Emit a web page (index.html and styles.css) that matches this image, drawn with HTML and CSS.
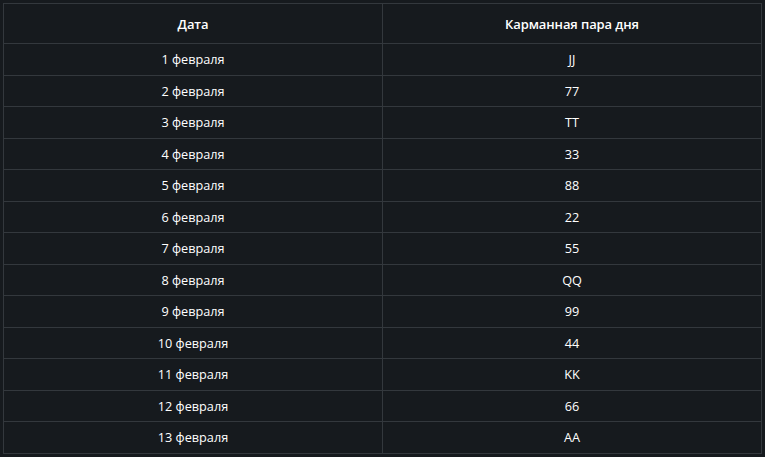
FILE: index.html
```html
<!DOCTYPE html>
<html lang="ru">
<head>
<meta charset="utf-8">
<link rel="stylesheet" href="styles.css">
</head>
<body>
<table class="pairs">
  <thead>
    <tr><th>Дата</th><th>Карманная пара дня</th></tr>
  </thead>
  <tbody>
    <tr><td>1 февраля</td><td>JJ</td></tr>
    <tr><td>2 февраля</td><td>77</td></tr>
    <tr><td>3 февраля</td><td>TT</td></tr>
    <tr><td>4 февраля</td><td>33</td></tr>
    <tr><td>5 февраля</td><td>88</td></tr>
    <tr><td>6 февраля</td><td>22</td></tr>
    <tr><td>7 февраля</td><td>55</td></tr>
    <tr><td>8 февраля</td><td>QQ</td></tr>
    <tr><td>9 февраля</td><td>99</td></tr>
    <tr><td>10 февраля</td><td>44</td></tr>
    <tr><td>11 февраля</td><td>KK</td></tr>
    <tr><td>12 февраля</td><td>66</td></tr>
    <tr><td>13 февраля</td><td>AA</td></tr>
  </tbody>
</table>
</body>
</html>
```
FILE: styles.css
```css
html, body {
  margin: 0;
  padding: 0;
  background: #161a1e;
}
body {
  padding: 3px 4px 0 3px;
  font-family: "Open Sans", "Noto Sans", sans-serif;
  font-size: 13px;
  color: #ffffff;
}
.pairs {
  width: 759px;
  border-collapse: collapse;
  table-layout: fixed;
}
.pairs th,
.pairs td {
  border: 1px solid #33383d;
  text-align: center;
  vertical-align: middle;
  padding: 0;
}
.pairs th {
  height: 39px;
  font-weight: 600;
  letter-spacing: -0.1px;
}
.pairs td {
  height: 30.5px;
  font-weight: 400;
  font-size: 12.7px;
}
.pairs th:first-child,
.pairs td:first-child {
  width: 378px;
}
```
